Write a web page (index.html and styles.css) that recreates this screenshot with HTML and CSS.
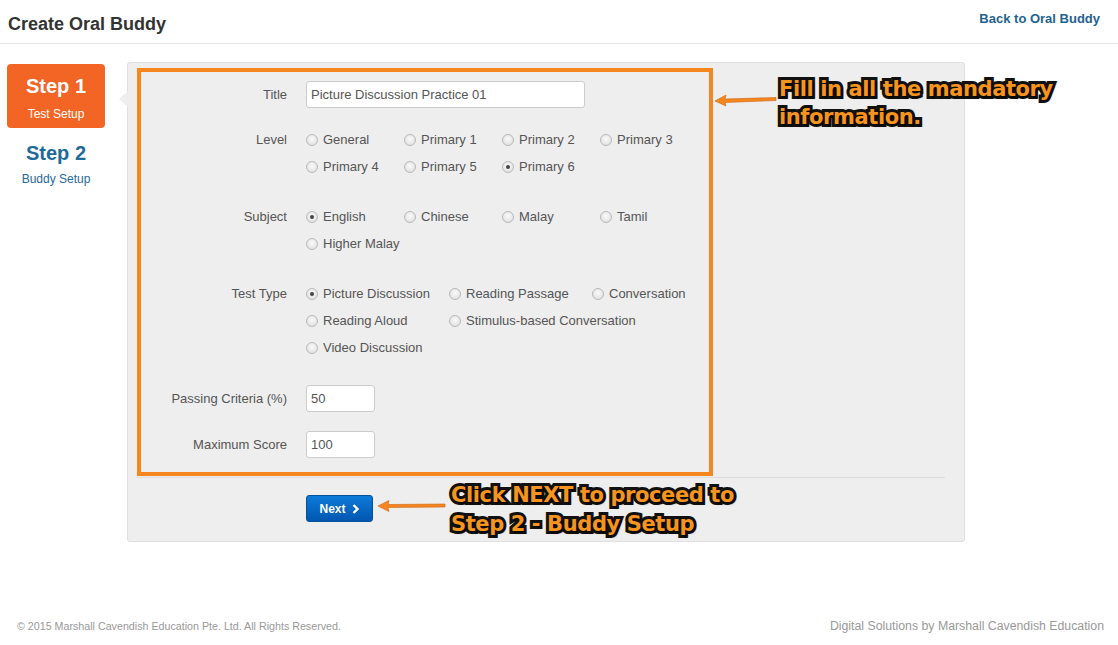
FILE: index.html
```html
<!DOCTYPE html>
<html>
<head>
<meta charset="utf-8">
<title>Create Oral Buddy</title>
<link rel="stylesheet" href="styles.css">
</head>
<body>
<div class="page">
  <header class="topbar">
    <h1 class="page-title">Create Oral Buddy</h1>
    <a class="back-link" href="#">Back to Oral Buddy</a>
  </header>

  <main class="content">
    <nav class="steps">
      <div class="step step-active">
        <div class="step-num">Step 1</div>
        <div class="step-name">Test Setup</div>
      </div>
      <div class="step">
        <div class="step-num">Step 2</div>
        <div class="step-name">Buddy Setup</div>
      </div>
    </nav>

    <section class="panel">
      <div class="highlight">
        <div class="row row-title">
          <label class="lbl">Title</label>
          <div class="ctrl"><input class="txt txt-title" type="text" value="Picture Discussion Practice 01"></div>
        </div>

        <div class="row row-group">
          <label class="lbl">Level</label>
          <div class="ctrl options cols4">
            <span class="opt"><i class="radio"></i>General</span>
            <span class="opt"><i class="radio"></i>Primary 1</span>
            <span class="opt"><i class="radio"></i>Primary 2</span>
            <span class="opt"><i class="radio"></i>Primary 3</span>
            <span class="opt"><i class="radio"></i>Primary 4</span>
            <span class="opt"><i class="radio"></i>Primary 5</span>
            <span class="opt"><i class="radio on"></i>Primary 6</span>
          </div>
        </div>

        <div class="row row-group">
          <label class="lbl">Subject</label>
          <div class="ctrl options cols4">
            <span class="opt"><i class="radio on"></i>English</span>
            <span class="opt"><i class="radio"></i>Chinese</span>
            <span class="opt"><i class="radio"></i>Malay</span>
            <span class="opt"><i class="radio"></i>Tamil</span>
            <span class="opt"><i class="radio"></i>Higher Malay</span>
          </div>
        </div>

        <div class="row row-group row-last-group">
          <label class="lbl">Test Type</label>
          <div class="ctrl options cols3">
            <span class="opt"><i class="radio on"></i>Picture Discussion</span>
            <span class="opt"><i class="radio"></i>Reading Passage</span>
            <span class="opt"><i class="radio"></i>Conversation</span>
            <span class="opt"><i class="radio"></i>Reading Aloud</span>
            <span class="opt opt-wide"><i class="radio"></i>Stimulus-based Conversation</span>
            <span class="opt"><i class="radio"></i>Video Discussion</span>
          </div>
        </div>

        <div class="row row-num">
          <label class="lbl">Passing Criteria (%)</label>
          <div class="ctrl"><input class="txt txt-num" type="text" value="50"></div>
        </div>

        <div class="row">
          <label class="lbl">Maximum Score</label>
          <div class="ctrl"><input class="txt txt-num" type="text" value="100"></div>
        </div>
      </div>

      <div class="actions">
        <button class="btn-next" type="button">Next
          <svg class="chev" width="8" height="10" viewBox="0 0 8 10"><path d="M1.5 1 L5.5 5 L1.5 9" fill="none" stroke="#fff" stroke-width="2.4"/></svg>
        </button>
      </div>
    </section>
  </main>

  <footer class="footer">
    <span>© 2015 Marshall Cavendish Education Pte. Ltd. All Rights Reserved.</span>
    <span class="footer-right">Digital Solutions by Marshall Cavendish Education</span>
  </footer>

  <svg class="arrow arrow-1" width="64" height="14" viewBox="0 0 64 14">
    <path d="M1 8 L12 2 L11 6 L62 4.5 L62 7.5 L11 9.5 L12 13 Z" fill="#f7861e" stroke="#c8650f" stroke-width="0.6"/>
  </svg>
  <div class="note note-1">Fill in all the mandatory<br>information.</div>

  <svg class="arrow arrow-2" width="70" height="14" viewBox="0 0 70 14">
    <path d="M1 7 L12 1.5 L11 5.5 L68 5 L68 8 L11 8.5 L12 12.5 Z" fill="#f7861e" stroke="#c8650f" stroke-width="0.6"/>
  </svg>
  <div class="note note-2">Click NEXT to proceed to<br>Step 2 - Buddy Setup</div>
</div>
</body>
</html>
```

FILE: styles.css
```css
* { box-sizing: border-box; }

html, body {
  margin: 0;
  padding: 0;
  background: #fff;
  font-family: "Liberation Sans", Arial, sans-serif;
  color: #555;
}

.page {
  position: relative;
  width: 1118px;
  height: 645px;
}

.topbar {
  height: 44px;
  border-bottom: 1px solid #e6e6e6;
  display: flex;
  justify-content: space-between;
  align-items: flex-start;
  padding: 0 18px 0 8px;
}

.page-title {
  margin: 13px 0 0;
  font-size: 18px;
  font-weight: bold;
  color: #333;
  line-height: 22px;
}

.back-link {
  margin-top: 11px;
  font-size: 13px;
  font-weight: bold;
  color: #24628f;
  text-decoration: none;
  line-height: 16px;
}

.content {
  display: flex;
  align-items: flex-start;
  gap: 22px;
  padding: 18px 0 0 7px;
}

.steps {
  width: 98px;
  margin-top: 2px;
  display: flex;
  flex-direction: column;
  gap: 2px;
}

.step {
  height: 64px;
  text-align: center;
  color: #1f6a99;
  padding-top: 11px;
}

.step-active {
  background: #f26524;
  border-radius: 4px;
  color: #fff;
}

.step-num {
  font-size: 20px;
  font-weight: bold;
  line-height: 22px;
}

.step-name {
  font-size: 12px;
  line-height: 14px;
  margin-top: 10px;
}

.step + .step { padding-top: 12px; }
.step + .step .step-name { margin-top: 8px; }

.panel {
  position: relative;
  width: 838px;
  background: #eeeeee;
  border: 1px solid #e0e0e0;
  border-radius: 3px;
  padding: 5px 19px 19px 9px;
}

.panel::before {
  content: "";
  position: absolute;
  left: -9px;
  top: 28px;
  border-style: solid;
  border-width: 8px 9px 8px 0;
  border-color: transparent #eeeeee transparent transparent;
}

.highlight {
  width: 576px;
  border: 4px solid #f7861e;
  padding: 9px 0 14px;
}

.row {
  display: grid;
  grid-template-columns: 146px auto;
  column-gap: 19px;
  align-items: start;
}

.row-title { margin-bottom: 18px; }
.row-group { margin-bottom: 23px; }
.row-last-group { margin-bottom: 24px; }
.row-num { margin-bottom: 19px; }

.lbl {
  text-align: right;
  font-size: 13px;
  line-height: 27px;
  color: #555;
}

.txt {
  height: 27px;
  border: 1px solid #cccccc;
  border-radius: 3px;
  background: #fff;
  font-family: "Liberation Sans", Arial, sans-serif;
  font-size: 13px;
  color: #555;
  padding: 0 4px;
  margin: 0;
  display: block;
}

.txt-title { width: 279px; }
.txt-num { width: 69px; }

.options {
  display: grid;
  grid-auto-rows: 27px;
}

.cols4 { grid-template-columns: repeat(4, 98px); }
.cols3 { grid-template-columns: repeat(3, 143px); }

.opt {
  display: flex;
  align-items: center;
  gap: 5px;
  font-size: 13px;
  color: #555;
  white-space: nowrap;
}

.opt-wide { grid-column: span 2; }

.radio {
  width: 12px;
  height: 12px;
  border-radius: 50%;
  border: 1px solid #b9b9b9;
  background: radial-gradient(circle at 50% 40%, #fafafa 0%, #e4e4e4 70%, #d6d6d6 100%);
  flex: none;
  position: relative;
}

.radio.on::after {
  content: "";
  position: absolute;
  left: 3px;
  top: 3px;
  width: 4px;
  height: 4px;
  border-radius: 50%;
  background: #444;
}

.actions {
  border-top: 1px solid #dcdcdc;
  margin-top: 1px;
  padding: 17px 0 0 169px;
}

.btn-next {
  width: 67px;
  height: 27px;
  border: 1px solid #05509a;
  border-radius: 3px;
  background: linear-gradient(#0c7ad8, #0057b0);
  color: #fff;
  font-family: "Liberation Sans", Arial, sans-serif;
  font-size: 12px;
  font-weight: bold;
  display: flex;
  align-items: center;
  justify-content: center;
  gap: 6px;
  padding: 0;
}

.footer {
  position: absolute;
  left: 0;
  right: 0;
  top: 619px;
  display: flex;
  justify-content: space-between;
  padding: 0 14px 0 17px;
  font-size: 10.7px;
  color: #999;
  line-height: 14px;
}

.footer-right { font-size: 12.3px; }

.note {
  position: absolute;
  font-family: "DejaVu Sans", sans-serif;
  font-weight: bold;
  font-size: 21px;
  line-height: 28px;
  color: #f7941d;
  -webkit-text-stroke: 6px #111;
  paint-order: stroke fill;
  text-shadow: 2px 2px 2px rgba(0,0,0,0.55);
  letter-spacing: -0.4px;
  white-space: nowrap;
}

.note-1 { left: 779px; top: 75px; }
.note-2 { left: 451px; top: 481px; line-height: 29px; }

.arrow { position: absolute; }
.arrow-1 { left: 714px; top: 93px; }
.arrow-2 { left: 377px; top: 499px; }
```
